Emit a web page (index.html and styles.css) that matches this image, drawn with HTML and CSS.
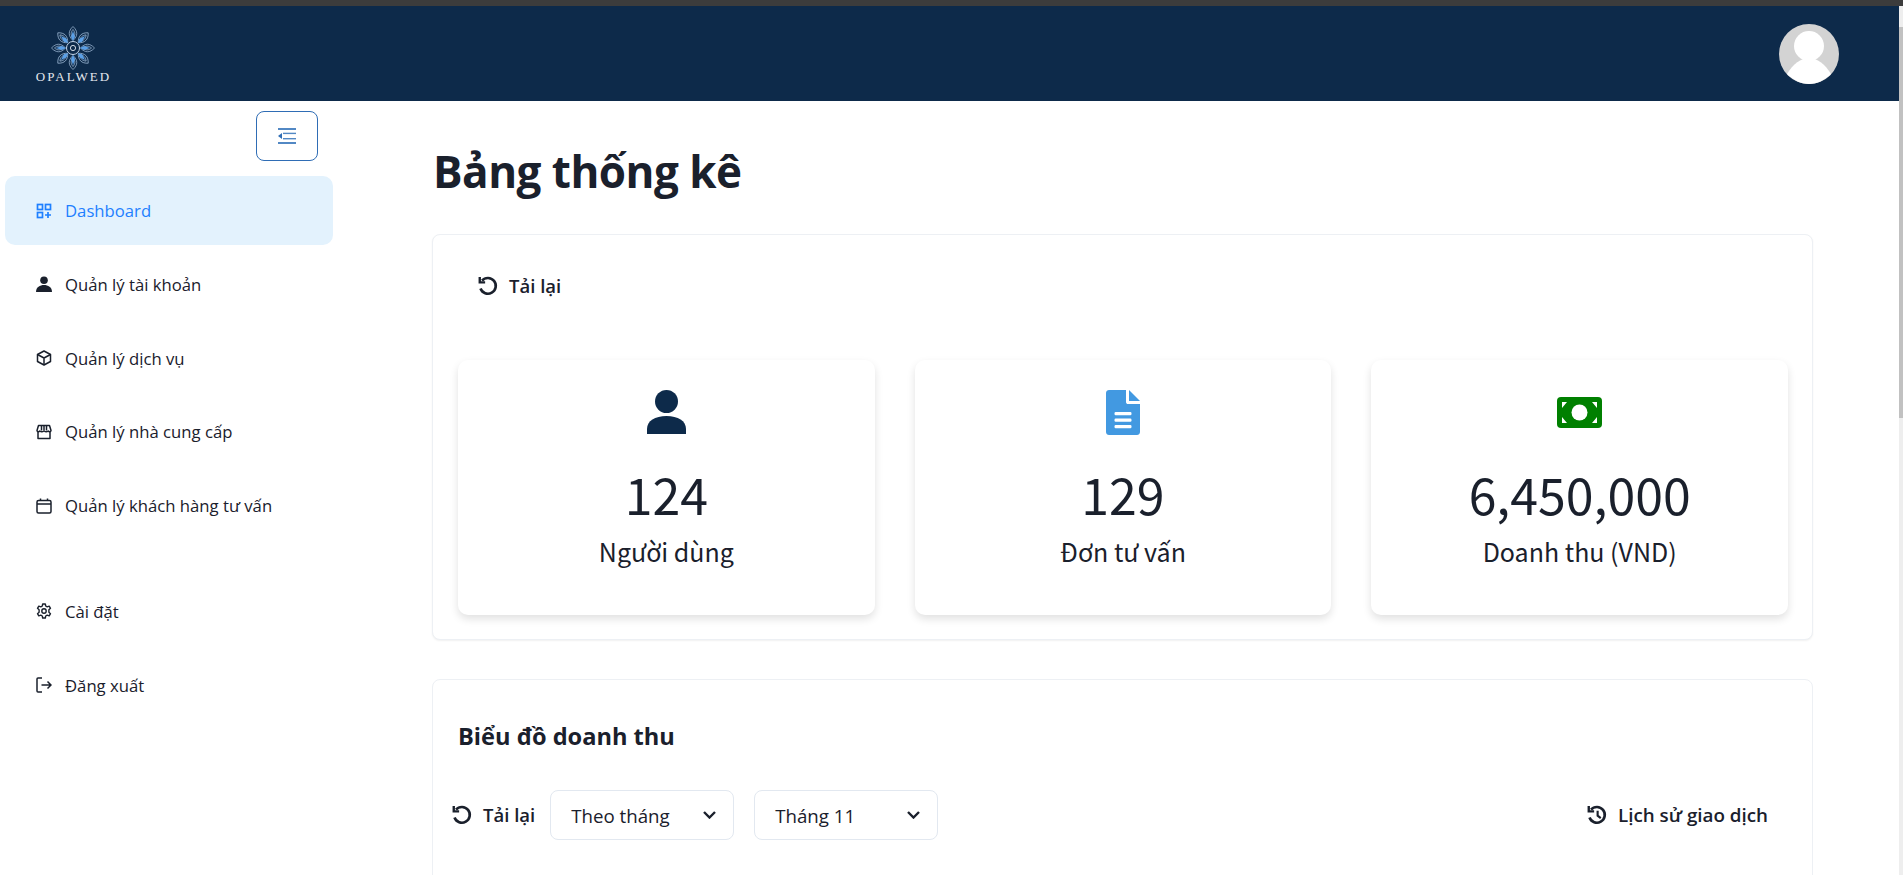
FILE: index.html
```html
<!DOCTYPE html>
<html lang="vi">
<head>
	<meta charset="UTF-8">
	<title>Bảng thống kê</title>
	<link rel="stylesheet" href="styles.css">
</head>
<body>
	<div class="window-bar"></div>
	<div class="window">
		<div class="page">
			<header class="topbar">
				<div class="logo">
					<svg class="logo-mark" viewBox="0 0 44 44" width="44" height="44" fill="none">
						<g stroke="#a9c3e0" stroke-width="0.700">
							<g id="petals">
								<path id="petal" d="M22 0.500 C27 5 27 10 22 14.500 C17 10 17 5 22 0.500 Z M22 3.500 C24.500 6.500 24.500 9.500 22 12 C19.500 9.500 19.500 6.500 22 3.500 Z"/>
								<use href="#petal" transform="rotate(45 22 22)"/>
								<use href="#petal" transform="rotate(90 22 22)"/>
								<use href="#petal" transform="rotate(135 22 22)"/>
							</g>
							<use href="#petals" transform="rotate(180 22 22)"/>
							<circle cx="22" cy="22" r="6.500" stroke="#c6d6e9" stroke-width="1"/>
							<circle cx="22" cy="22" r="2.600" stroke="#e4ebf3" stroke-width="0.900"/>
						</g>
						<g fill="#5a9fe6">
							<g id="leaves">
								<path id="leaf" d="M22 5 L24 11 L22 15 L20 11 Z"/>
								<use href="#leaf" transform="rotate(45 22 22)"/>
								<use href="#leaf" transform="rotate(90 22 22)"/>
								<use href="#leaf" transform="rotate(135 22 22)"/>
							</g>
							<use href="#leaves" transform="rotate(180 22 22)"/>
						</g>
					</svg>
					<span class="logo-name">OPALWED</span>
				</div>
				<svg class="avatar" viewBox="0 0 60 60" width="60" height="60">
					<circle cx="30" cy="30" r="30" fill="#d3d3d3"/>
					<circle cx="30" cy="22" r="15" fill="#fff"/>
					<path d="M8 50 C14 40 22 34 30 34 C38 34 46 40 52 50 C46 56 38 60 30 60 C22 60 14 56 8 50 Z" fill="#fff"/>
				</svg>
			</header>

			<div class="layout">
				<aside class="sidebar">
					<div class="toggle-row">
						<button class="toggle" type="button">
							<svg viewBox="0 0 18 16" width="18" height="16" fill="#5288c4">
								<rect x="0" y="0" width="18" height="2"/>
								<rect x="5" y="4.700" width="13" height="1.400"/>
								<rect x="5" y="10" width="13" height="1.400"/>
								<rect x="0" y="14" width="18" height="2"/>
								<path d="M0 8 L4 5 V11 Z" fill="#2f6db5"/>
							</svg>
						</button>
					</div>
					<nav class="menu">
						<a class="menu-item active">
							<svg class="menu-icon" viewBox="0 0 16 16" fill="none" stroke="currentColor" stroke-width="1.700">
								<rect x="1.500" y="1.500" width="5" height="5"/>
								<rect x="9.500" y="1.500" width="5" height="5"/>
								<rect x="1.500" y="9.500" width="5" height="5"/>
								<path d="M12 9v6M9 12h6"/>
							</svg>
							Dashboard
						</a>
						<a class="menu-item">
							<svg class="menu-icon" viewBox="0 0 16 16" fill="currentColor">
								<circle cx="8" cy="4.200" r="3.800"/>
								<path d="M0 16 C0 11 4 9 8 9 C12 9 16 11 16 16 Z"/>
							</svg>
							Quản lý tài khoản
						</a>
						<a class="menu-item">
							<svg class="menu-icon" viewBox="0 0 16 16" fill="none" stroke="currentColor" stroke-width="1.500" stroke-linejoin="round">
								<path d="M8 1 L14.500 4.500 V11.500 L8 15 L1.500 11.500 V4.500 Z"/>
								<path d="M1.500 4.500 L8 8 L14.500 4.500 M8 8 V15"/>
							</svg>
							Quản lý dịch vụ
						</a>
						<a class="menu-item">
							<svg class="menu-icon" viewBox="0 0 16 16" fill="none" stroke="currentColor" stroke-width="1.500" stroke-linejoin="round">
								<path d="M2.500 1.500 H13.500 L15 6.500 C15 8 13 8 12.200 7 C11 8 9.500 8 8 7 C6.500 8 5 8 3.800 7 C3 8 1 8 1 6.500 Z"/>
								<path d="M2 8 V14.500 H14 V8 M5.500 2 V6.500 M8 2 V6.500 M10.500 2 V6.500"/>
							</svg>
							Quản lý nhà cung cấp
						</a>
						<a class="menu-item">
							<svg class="menu-icon" viewBox="0 0 16 16" fill="none" stroke="currentColor" stroke-width="1.500">
								<rect x="1" y="2.500" width="14" height="12.500" rx="1.500"/>
								<path d="M1 6 H15 M4.500 0.500 V3 M11.500 0.500 V3"/>
							</svg>
							Quản lý khách hàng tư vấn
						</a>
						<a class="menu-item menu-item-low">
							<svg class="menu-icon" viewBox="0 0 16 16" fill="none" stroke="currentColor" stroke-width="1.400" stroke-linejoin="round">
								<path d="M6.700 1 H9.300 L9.700 3 L11.200 3.800 L13.200 3.100 L14.500 5.300 L12.900 6.700 V9.300 L14.500 10.700 L13.200 12.900 L11.200 12.200 L9.700 13 L9.300 15 H6.700 L6.300 13 L4.800 12.200 L2.800 12.900 L1.500 10.700 L3.100 9.300 V6.700 L1.500 5.300 L2.800 3.100 L4.800 3.800 L6.300 3 Z"/>
								<circle cx="8" cy="8" r="2.200"/>
							</svg>
							Cài đặt
						</a>
						<a class="menu-item">
							<svg class="menu-icon" viewBox="0 0 16 16" fill="none" stroke="currentColor" stroke-width="1.500">
								<path d="M6 1 H2 C1.400 1 1 1.400 1 2 V14 C1 14.600 1.400 15 2 15 H6"/>
								<path d="M5.500 8 H15 M11.500 4.500 L15 8 L11.500 11.500"/>
							</svg>
							Đăng xuất
						</a>
					</nav>
				</aside>

				<main class="content">
					<h1 class="page-title">Bảng thống kê</h1>

					<section class="panel panel-stats">
						<div class="reload">
							<svg class="reload-icon" viewBox="0 0 16 16" fill="none" stroke="currentColor" stroke-width="2.100">
								<path d="M3.200 3.700 A6.300 6.300 0 1 1 2 10"/>
								<path d="M1.400 0.800 V5.100 H5.700" stroke-width="1.900"/>
							</svg>
							Tải lại
						</div>
						<div class="stats">
							<div class="stat">
								<svg class="stat-icon" viewBox="0 0 39 45" width="39" height="45" fill="#0d2a4a">
									<circle cx="19.500" cy="11.500" r="11.500"/>
									<path d="M0 44 V39 C0 31 8 26 19.500 26 C31 26 39 31 39 39 V44 Z"/>
								</svg>
								<div class="stat-value">124</div>
								<div class="stat-label">Người dùng</div>
							</div>
							<div class="stat">
								<svg class="stat-icon" viewBox="0 0 34 45" width="34" height="45" fill="#4299e1">
									<path d="M3 0 H20 V12 C20 13.500 21 14 22 14 H34 V42 C34 44 32.500 45 31 45 H3 C1.500 45 0 44 0 42 V3 C0 1 1.500 0 3 0 Z"/>
									<path d="M23 0 L34 11 H23 Z"/>
									<rect x="8.500" y="22" width="17" height="3.200" rx="1.200" fill="#fff"/>
									<rect x="8.500" y="28.500" width="17" height="3.200" rx="1.200" fill="#fff"/>
									<rect x="8.500" y="35" width="17" height="3.200" rx="1.200" fill="#fff"/>
								</svg>
								<div class="stat-value">129</div>
								<div class="stat-label">Đơn tư vấn</div>
							</div>
							<div class="stat">
								<svg class="stat-icon" viewBox="0 0 45 45" width="45" height="45">
									<rect x="0" y="7" width="45" height="31" rx="4" fill="#008000"/>
									<circle cx="22.500" cy="22.500" r="8" fill="#fff"/>
									<path d="M5 12 H10 L5 18 Z M40 12 H35 L40 18 Z M5 33 H10 L5 27 Z M40 33 H35 L40 27 Z" fill="#fff"/>
								</svg>
								<div class="stat-value">6,450,000</div>
								<div class="stat-label">Doanh thu (VND)</div>
							</div>
						</div>
					</section>

					<section class="panel panel-chart">
						<h2 class="chart-title">Biểu đồ doanh thu</h2>
						<div class="chart-tools">
							<div class="reload reload-small">
								<svg class="reload-icon" viewBox="0 0 16 16" fill="none" stroke="currentColor" stroke-width="2.100">
									<path d="M3.200 3.700 A6.300 6.300 0 1 1 2 10"/>
									<path d="M1.400 0.800 V5.100 H5.700" stroke-width="1.900"/>
								</svg>
								Tải lại
							</div>
							<div class="select">Theo tháng
								<svg viewBox="0 0 13 8" width="13" height="8" fill="none" stroke="currentColor" stroke-width="2.400"><path d="M1 1 L6.500 6.500 L12 1"/></svg>
							</div>
							<div class="select">Tháng 11
								<svg viewBox="0 0 13 8" width="13" height="8" fill="none" stroke="currentColor" stroke-width="2.400"><path d="M1 1 L6.500 6.500 L12 1"/></svg>
							</div>
							<div class="history">
								<svg class="reload-icon" viewBox="0 0 16 16" fill="none" stroke="currentColor" stroke-width="2.100">
									<path d="M3.200 3.700 A6.300 6.300 0 1 1 2 10"/>
									<path d="M1.400 0.800 V5.100 H5.700" stroke-width="1.900"/>
									<path d="M8.500 4.500 V8.500 L11 10.500" stroke-width="1.700"/>
								</svg>
								Lịch sử giao dịch
							</div>
						</div>
					</section>
				</main>
			</div>
		</div>
		<div class="scrollbar"><div class="scrollbar-thumb"></div></div>
	</div>
</body>
</html>
```

FILE: styles.css
```css
html, body {
	margin: 0;
	padding: 0;
	height: 100%;
	overflow: hidden;
}
body {
	font-family: "Open Sans", "Noto Sans", sans-serif;
	color: #1a202c;
	background: #fff;
	display: flex;
	flex-direction: column;
}
.window-bar {
	height: 6px;
	background: #3c3c3c;
	flex: none;
}
.window {
	flex: 1;
	min-height: 0;
	display: flex;
}
.page {
	flex: 1;
	min-width: 0;
	overflow: hidden;
}
.scrollbar {
	width: 4px;
	background: #eeeeee;
	padding-top: 21px;
}
.scrollbar-thumb {
	height: 391px;
	background: #c1c1c1;
}

/* header */
.topbar {
	height: 95px;
	background: #0d2a4a;
	display: flex;
	align-items: center;
	justify-content: space-between;
	padding: 0 60px 0 36px;
}
.logo {
	width: 74px;
	margin-top: 3px;
	display: flex;
	flex-direction: column;
	align-items: center;
}
.logo-name {
	font-family: "Liberation Serif", serif;
	font-size: 13px;
	letter-spacing: 2px;
	color: #e4e8ee;
	line-height: 14px;
	white-space: nowrap;
	margin-left: 1px;
}
.avatar {
	display: block;
}

/* sidebar */
.layout {
	display: flex;
}
.sidebar {
	width: 333px;
	flex: none;
	padding: 10px 0 0 5px;
	box-sizing: border-box;
}
.toggle-row {
	display: flex;
	justify-content: flex-end;
	padding-right: 15px;
}
.toggle {
	width: 62px;
	height: 50px;
	background: #fff;
	border: 1px solid #2f6db5;
	border-radius: 8px;
	display: flex;
	align-items: center;
	justify-content: center;
	padding: 0;
}
.menu {
	margin-top: 15px;
	display: flex;
	flex-direction: column;
	gap: 4.800px;
}
.menu-item {
	height: 69px;
	padding-left: 31px;
	display: flex;
	align-items: center;
	gap: 13px;
	font-size: 16.700px;
	color: #1a202c;
	border-radius: 10px;
}
.menu-item.active {
	background: #e3f2fd;
	color: #1e80ff;
}
.menu-item-low {
	margin-top: 32px;
}
.menu-icon {
	width: 16px;
	height: 16px;
	flex: none;
}

/* main */
.content {
	flex: 1;
	min-width: 0;
	padding: 0 86px 0 99px;
}
.page-title {
	margin: 46px 0 0 1px;
	font-size: 44px;
	line-height: 48px;
	font-weight: 700;
	letter-spacing: -0.500px;
}
.panel {
	background: #fff;
	border: 1px solid #edf0f4;
	border-radius: 8px;
	box-sizing: border-box;
}
.panel-stats {
	margin-top: 39px;
	height: 406px;
	padding: 0 24px 0 25px;
	box-shadow: 0 1px 2px rgba(0, 0, 0, 0.06);
}
.reload {
	display: flex;
	align-items: center;
	gap: 11px;
	font-size: 18.500px;
	font-weight: 600;
	padding: 39px 0 0 20px;
	line-height: 24px;
}
.reload-icon {
	width: 20px;
	height: 20px;
	flex: none;
}
.stats {
	margin-top: 62px;
	display: grid;
	grid-template-columns: repeat(3, 1fr);
	gap: 40px;
}
.stat {
	height: 255px;
	border-radius: 10px;
	box-shadow: 0 4px 8px rgba(0, 0, 0, 0.12);
	display: flex;
	flex-direction: column;
	align-items: center;
	font-family: "Noto Sans CJK SC", "Noto Sans", sans-serif;
	padding-top: 30px;
	box-sizing: border-box;
}
.stat-icon {
	display: block;
}
.stat-value {
	margin-top: 23px;
	font-size: 50px;
	line-height: 70px;
}
.stat-label {
	margin-top: 3px;
	font-size: 25px;
	line-height: 40px;
}
.panel-chart {
	margin-top: 39px;
	height: 300px;
	padding: 0 24px 0 19px;
}
.chart-title {
	margin: 38px 0 0 6px;
	font-size: 23.600px;
	line-height: 36px;
	font-weight: 700;
}
.chart-tools {
	margin-top: 36px;
	display: flex;
	align-items: center;
}
.reload-small {
	padding: 0;
	margin-right: 15px;
}
.select {
	width: 184px;
	height: 50px;
	box-sizing: border-box;
	border: 1px solid #e2e8f0;
	border-radius: 8px;
	padding: 0 17px 0 20px;
	font-size: 18.700px;
	display: flex;
	align-items: center;
	justify-content: space-between;
	margin-right: 20px;
}
.history {
	margin-left: auto;
	margin-right: 20px;
	display: flex;
	align-items: center;
	gap: 11px;
	font-size: 18.800px;
	font-weight: 600;
}
```
